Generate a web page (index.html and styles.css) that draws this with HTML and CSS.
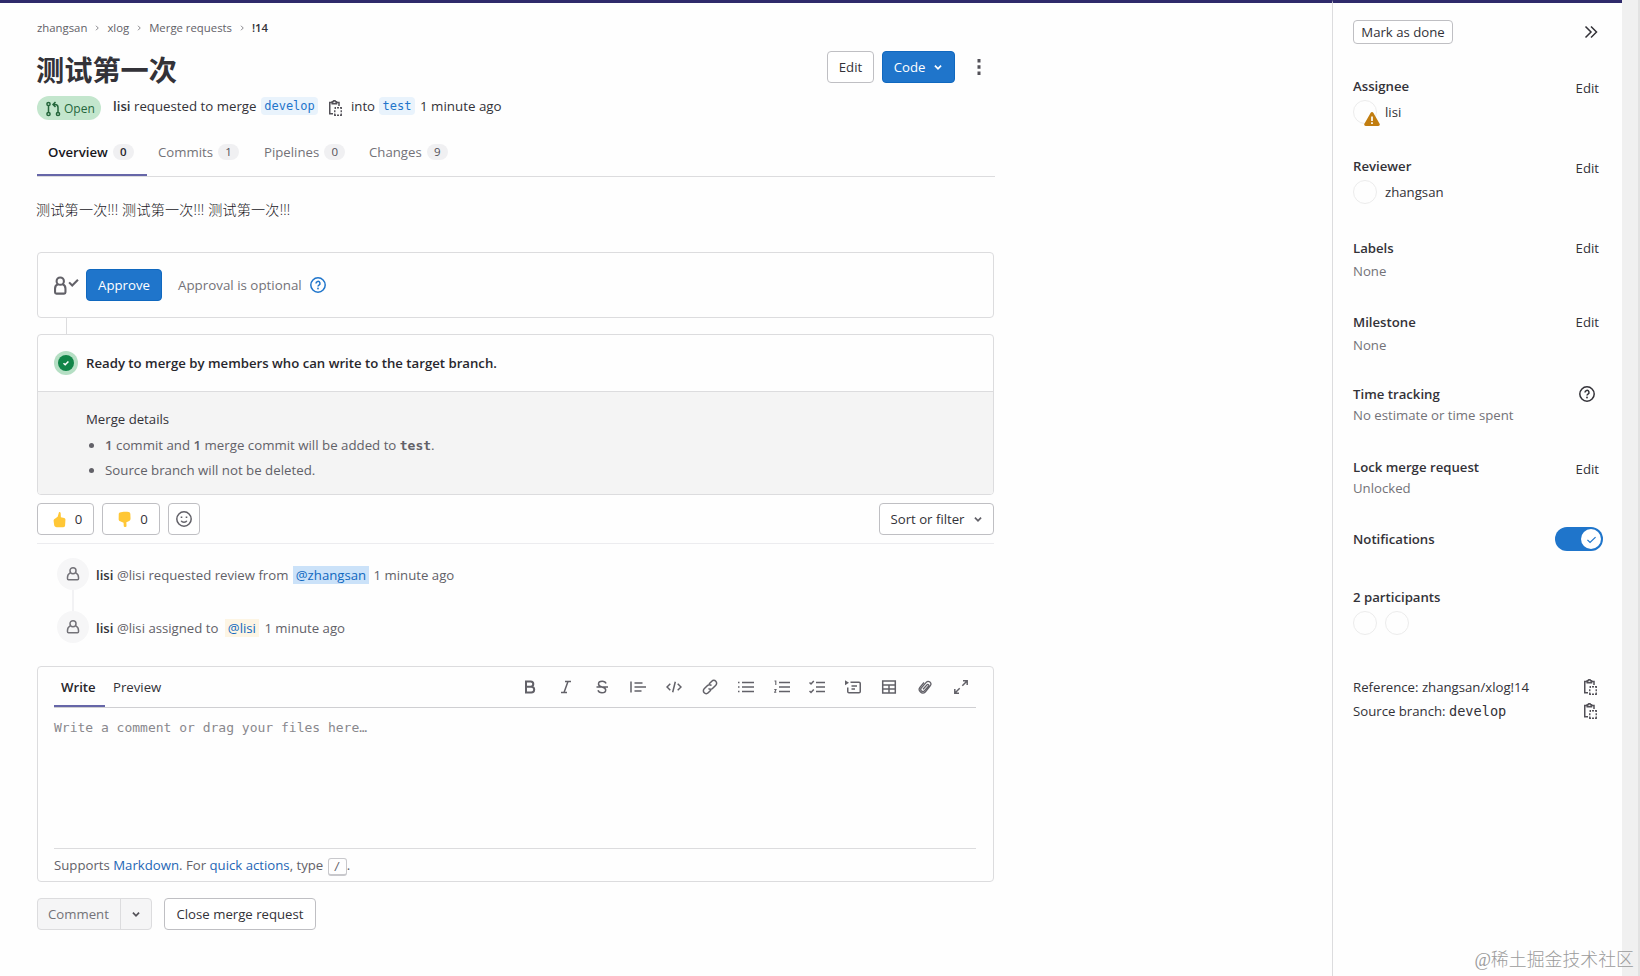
FILE: index.html
```html
<!DOCTYPE html>
<html lang="en">
<head>
  <meta charset="UTF-8">
  <meta name="viewport" content="width=device-width, initial-scale=1.0">
  <title>测试第一次 (!14) · Merge requests</title>
  <link rel="stylesheet" href="styles.css">
</head>
<body>
  <svg width="0" height="0" class="sprite">
    <symbol id="chevron-down" viewBox="0 0 16 16"><path d="M4.500 6.500 8 10l3.500-3.500" stroke-width="2"/></symbol>
    <symbol id="chevron-right" viewBox="0 0 16 16"><path d="M6 3.500 10.500 8 6 12.500" stroke-width="2"/></symbol>
    <symbol id="copy" viewBox="0 0 16 16"><path d="M4 2.500H1.750v11.250H5M8.800 2.500H11V6M4.200 3.800V1.800h1a1.100 1.100 0 0 1 2.300 0h1v2z"/><path d="M8 7.750h-.75V9M12 7.750h1.250V9M6.750 13.500v1.750H8M13.250 13.500v1.750H12M9 7.750h2M9 15.250h2M6.750 10.300v2M13.250 10.300v2" stroke-width="1.400"/></symbol>
    <symbol id="question" viewBox="0 0 16 16"><circle cx="8" cy="8" r="7.200"/><path d="M6 6.400a2 2 0 1 1 3 1.700c-.7.400-1 .700-1 1.300"/><circle cx="8" cy="11.500" r=".9" fill="currentColor" stroke="none"/></symbol>
    <symbol id="user" viewBox="0 0 16 16"><circle cx="8" cy="4.700" r="3"/><path d="M5.300 6.800C3.300 7.800 2.500 9.500 2.500 11.300v1.500c0 .600.400 1 1 1h9c.600 0 1-.400 1-1v-1.500c0-1.800-.800-3.500-2.800-4.500"/></symbol>
  </svg>

  <div class="page">
    <div class="main">
      <nav class="breadcrumbs">
        <span>zhangsan</span><svg class="sep"><use href="#chevron-right"/></svg>
        <span>xlog</span><svg class="sep"><use href="#chevron-right"/></svg>
        <span>Merge requests</span><svg class="sep"><use href="#chevron-right"/></svg>
        <b>!14</b>
      </nav>

      <header class="mr-header">
        <h1>测试第一次</h1>
        <div class="header-actions">
          <button class="btn btn-edit">Edit</button>
          <button class="btn btn-blue btn-code">Code <svg class="s12"><use href="#chevron-down"/></svg></button>
          <svg class="kebab" viewBox="0 0 16 16"><path d="M6.500 0h3v3.500h-3zM6.500 6.250h3v3.500h-3zM6.500 12.500h3V16h-3z" fill="currentColor" stroke="none"/></svg>
        </div>
      </header>

      <div class="mr-info">
        <span class="badge-open">
          <svg class="s16" viewBox="0 0 16 16"><circle cx="3.500" cy="3" r="1.600"/><circle cx="3.500" cy="13" r="1.600"/><circle cx="13" cy="13" r="1.600"/><path d="M3.500 4.700v6.600M13 11.300V6.500c0-2-1-3-3-3H8.500M10.500 1 8 3.500 10.500 6"/></svg>
          Open
        </span>
        <span class="mr-author"><b>lisi</b> requested to merge</span>
        <code class="branch branch-source">develop</code>
        <svg class="s16 copy-branch"><use href="#copy"/></svg>
        <span class="into">into</span>
        <code class="branch branch-target">test</code>
        <span class="ago">1 minute ago</span>
      </div>

      <div class="tabs">
        <a class="tab active">Overview <i>0</i></a>
        <a class="tab commits">Commits <i>1</i></a>
        <a class="tab pipelines">Pipelines <i>0</i></a>
        <a class="tab changes">Changes <i>9</i></a>
      </div>

      <p class="description">测试第一次!!! 测试第一次!!! 测试第一次!!!</p>

      <section class="card approval">
        <svg class="approval-icon" viewBox="0 0 24 18"><circle cx="6" cy="4.800" r="3.500"/><path d="M3.600 7.800C1.700 8.700 1 10 1 12v3.500c0 .800.500 1.300 1.300 1.300h7.400c.800 0 1.300-.500 1.300-1.300V12c0-2-.7-3.300-2.600-4.200M14.500 6l3 3L23 3.500"/></svg>
        <button class="btn btn-blue btn-approve">Approve</button>
        <span class="muted optional">Approval is optional</span>
        <svg class="s16 blue"><use href="#question"/></svg>
      </section>
      <div class="connector"></div>

      <section class="card merge-box">
        <div class="ready">
          <span class="status"><svg viewBox="0 0 16 16"><circle cx="8" cy="8" r="8" fill="#108548" stroke="none"/><path d="m5.500 8.200 1.700 1.600 3.200-3.300" stroke="#fff"/></svg></span>
          <b>Ready to merge by members who can write to the target branch.</b>
        </div>
        <div class="merge-details">
          <p>Merge details</p>
          <ul>
            <li><b>1</b> commit and <b>1</b> merge commit will be added to <code>test</code>.</li>
            <li>Source branch will not be deleted.</li>
          </ul>
        </div>
      </section>

      <div class="awards">
        <button class="btn award"><svg class="thumb" viewBox="0 0 14 18"><path d="M6.500 1c1-.500 2 .500 1.800 2.200L8.500 6.500l3.500.800c1 .200 1.500 1 1.400 2l-.4 6.200c-.1 1.200-.8 1.800-2 1.800H4c-1.500 0-2.500-.8-2.700-2L.7 11c-.2-1.500.5-2.300 1.700-3L5 6z"/></svg>0</button>
        <button class="btn award award-down"><svg class="thumb" viewBox="0 0 14 18"><path d="M2 1.500C4.500.5 9 .5 11.500 1c1.200.2 1.700 1 1.800 2l.2 5c0 1.500-.7 2.500-2 3L9 12l.2 4c0 1.500-3 1.500-3 0L6 12.500 2.300 11C1 10.500.7 9.500.7 8.500L.8 3c0-.8.4-1.300 1.200-1.500z"/></svg>0</button>
        <button class="btn award award-add"><svg class="s16" viewBox="0 0 16 16"><circle cx="8" cy="8" r="7.200"/><path d="M5.200 9.700c1 2.100 4.600 2.100 5.600 0"/><path d="M5.500 5.500v1.500M10.500 5.500v1.500" stroke-width="1.600"/></svg></button>
        <button class="btn btn-sort">Sort or filter <svg class="s12"><use href="#chevron-down"/></svg></button>
      </div>

      <ul class="notes">
        <li class="note">
          <span class="note-icon"><svg class="s16"><use href="#user"/></svg></span>
          <span class="note-text"><b>lisi</b> @lisi requested review from <a class="mention me">@zhangsan</a> 1 minute ago</span>
        </li>
        <li class="note">
          <span class="note-icon"><svg class="s16"><use href="#user"/></svg></span>
          <span class="note-text"><b>lisi</b> @lisi assigned to <a class="mention other">@lisi</a> 1 minute ago</span>
        </li>
      </ul>

      <section class="card editor">
        <div class="editor-head">
          <span class="editor-tab active">Write</span>
          <span class="editor-tab">Preview</span>
          <div class="toolbar">
            <svg viewBox="0 0 16 16"><path d="M4 2.500h4.700a2.600 2.600 0 0 1 0 5.200H4zM4 7.700h5.300a2.900 2.900 0 0 1 0 5.800H4z" stroke-width="2"/></svg>
            <svg viewBox="0 0 16 16"><path d="M7 2.500h6M3 13.500h6M10 2.500l-4 11"/></svg>
            <svg viewBox="0 0 16 16"><path d="M12 4.500C11.500 3 10 2.300 8.200 2.300 6 2.300 4.500 3.300 4.500 5S6 7.400 8 8s3.700 1.200 3.700 3-1.500 2.800-3.700 2.800c-2 0-3.500-.8-4-2.500M2.500 8h11.500"/></svg>
            <svg viewBox="0 0 16 16"><path d="M1 2.500v11M4.500 4h8M4.500 8H16M4.500 12h7"/></svg>
            <svg viewBox="0 0 16 16"><path d="M4.300 4.700 1 8l3.300 3.300M11.700 4.700 15 8l-3.300 3.300M9.300 2.700 6.700 13.300"/></svg>
            <svg viewBox="0 0 16 16"><path d="m7 5 2.800-2.800a2.800 2.800 0 0 1 4 4L10.500 9.500a2.800 2.800 0 0 1-4 0M9 11l-2.800 2.800a2.800 2.800 0 0 1-4-4L5.500 6.500a2.800 2.800 0 0 1 4 0"/></svg>
            <svg viewBox="0 0 16 16"><path d="M4 3.500h12M4 8h12M4 12.500h12"/><path d="M0 3.500h1.500M0 8h1.500M0 12.500h1.500"/></svg>
            <svg viewBox="0 0 16 16"><path d="M5 3.500h11M5 8h11M5 12.500h11"/><path d="M.5 2h1.300v4M.3 10.500H2L.7 13.300h1.600" stroke-width="1.100"/></svg>
            <svg viewBox="0 0 16 16"><path d="M7 3.500h9M7 8h9M7 12.500h9M.5 3.500 2 5l2.800-3M.5 12 2 13.500l2.800-3"/></svg>
            <svg viewBox="0 0 16 16"><path d="M5.500 3.250H14c.700 0 1.250.500 1.250 1.250v8c0 .700-.5 1.250-1.250 1.250H4c-.7 0-1.250-.5-1.250-1.250V8.500M6.500 7H12M6.500 10H10"/><path d="M0 1.300 4 3.800 0 6.300z" fill="currentColor" stroke="none"/></svg>
            <svg viewBox="0 0 16 16"><path d="M1.700 2h12.600v12H1.700zM1.700 6h12.600M1.700 10h12.600M8 6v8"/></svg>
            <svg viewBox="0 0 16 16"><path d="m6 10.300 4.300-4.700a1 1 0 0 1 1.400 1.300l-4.400 5a2.100 2.100 0 0 1-3.100-2.800l5-5.700a2.600 2.600 0 0 1 4 3.400L8.300 13a3.600 3.600 0 0 1-5.400-4.700L7 3.500" stroke-width="1.300"/></svg>
            <svg viewBox="0 0 16 16"><path d="M10 1.800h4.200V6M14 2 9.300 6.700M6 14.200H1.800V10M2 14l4.700-4.700"/></svg>
          </div>
        </div>
        <div class="editor-text">Write a comment or drag your files here…</div>
        <div class="editor-foot">Supports <a>Markdown</a>. For <a>quick actions</a>, type <kbd>/</kbd>.</div>
      </section>

      <div class="form-actions">
        <div class="split"><span>Comment</span><span class="split-toggle"><svg class="s12"><use href="#chevron-down"/></svg></span></div>
        <button class="btn btn-close">Close merge request</button>
      </div>
    </div>

    <aside class="sidebar">
      <div class="side-top">
        <button class="btn btn-done">Mark as done</button>
        <svg class="collapse" viewBox="0 0 16 16"><path d="M2.500 2.500 8 8l-5.500 5.500M8 2.500 13.500 8 8 13.500"/></svg>
      </div>
      <div class="block assignee">
        <div class="row"><b>Assignee</b><a>Edit</a></div>
        <div class="person">
          <span class="avatar"><svg class="warning" viewBox="0 0 16 14"><path d="M8 0c.6 0 1 .3 1.300.800l6.300 11c.6 1-.1 2.200-1.300 2.200H1.700C.5 14-.2 12.800.4 11.800l6.300-11C7 .3 7.400 0 8 0z" fill="#c17d10" stroke="none"/><path d="M8 4.500V9M8 10.300v1.800" stroke="#fff" stroke-width="1.700"/></svg></span>lisi
        </div>
      </div>
      <div class="block reviewer">
        <div class="row"><b>Reviewer</b><a>Edit</a></div>
        <div class="person"><span class="avatar"></span>zhangsan</div>
      </div>
      <div class="block labels">
        <div class="row"><b>Labels</b><a>Edit</a></div>
        <div class="value">None</div>
      </div>
      <div class="block milestone">
        <div class="row"><b>Milestone</b><a>Edit</a></div>
        <div class="value">None</div>
      </div>
      <div class="block time">
        <div class="row"><b>Time tracking</b><svg class="s16"><use href="#question"/></svg></div>
        <div class="value">No estimate or time spent</div>
      </div>
      <div class="block lock">
        <div class="row"><b>Lock merge request</b><a>Edit</a></div>
        <div class="value">Unlocked</div>
      </div>
      <div class="block notifications">
        <b>Notifications</b>
        <span class="toggle"><span class="knob"><svg viewBox="0 0 16 16"><path d="m3 8.500 3.200 3.200L13 5"/></svg></span></span>
      </div>
      <div class="block participants">
        <b>2 participants</b>
        <div class="avatars"><span class="avatar"></span><span class="avatar"></span></div>
      </div>
      <div class="block refs">
        <div class="ref"><span>Reference: zhangsan/xlog!14</span><svg class="s16"><use href="#copy"/></svg></div>
        <div class="ref"><span>Source branch: <code>develop</code></span><svg class="s16"><use href="#copy"/></svg></div>
      </div>
    </aside>
    <div class="scrollbar"></div>
  </div>
  <div class="watermark">@稀土掘金技术社区</div>
</body>
</html>
```
FILE: styles.css
```css
* {
  box-sizing: border-box;
}
body {
  margin: 0;
  height: 976px;
  overflow: hidden;
  background: #fefefe;
  color: #333238;
  font: 13.2px/20px "Open Sans", "Noto Sans CJK SC", sans-serif;
}
b {
  font-weight: 600;
}
svg {
  display: block;
  flex: none;
  fill: none;
  stroke: currentColor;
  stroke-width: 1.5;
}
.sprite {
  position: absolute;
}
.s16 {
  width: 16px;
  height: 16px;
}
.s12 {
  width: 14px;
  height: 14px;
}
code {
  font-family: "DejaVu Sans Mono", monospace;
  font-size: 12px;
}
.page {
  display: flex;
  height: 976px;
}
.main {
  width: 1332px;
  border-top: 3px solid #2f2a6b;
  padding: 15px 337px 0 37px;
}
.sidebar {
  width: 290px;
  border-top: 3px solid #2f2a6b;
  border-left: 1px solid #dcdcde;
  padding: 17px 19px 0 20px;
}
.scrollbar {
  width: 18px;
  background: #f0f0f0;
  border-right: 2px solid #e2e2e2;
}

/* header */
.breadcrumbs {
  display: flex;
  align-items: center;
  height: 20px;
  font-size: 11.35px;
  color: #626168;
}
.breadcrumbs b {
  color: #333238;
}
.sep {
  width: 8px;
  height: 8px;
  margin: 0 6px;
  color: #89888d;
}
.mr-header {
  display: flex;
  justify-content: space-between;
  height: 50px;
  margin-top: 8px;
}
h1 {
  margin: 4px 0 0 -1px;
  font-size: 28.2px;
  line-height: 40px;
  font-weight: 700;
}
.header-actions {
  display: flex;
  padding-top: 5px;
}
.btn {
  display: flex;
  align-items: center;
  justify-content: center;
  height: 32px;
  padding: 0;
  border: 1px solid #bfbfc3;
  border-radius: 4px;
  background: #fff;
  color: #333238;
  font: inherit;
}
.btn-blue {
  background: #1f75cb;
  border-color: #1068bf;
  color: #fff;
  font-weight: 500;
}
.btn-edit {
  width: 47px;
}
.btn-code {
  width: 73px;
  padding-left: 2px;
  margin-left: 8px;
  gap: 6px;
}
.kebab {
  width: 16px;
  height: 16px;
  margin: 8px 8px 0 16px;
  color: #535158;
}
.mr-info {
  display: flex;
  height: 24px;
  line-height: 20px;
}
.badge-open {
  display: flex;
  align-items: center;
  width: 64px;
  height: 24px;
  padding: 1px 0 0 8px;
  gap: 3px;
  border-radius: 12px;
  background: #c3e6cd;
  color: #24663b;
  font-size: 12px;
}
.mr-author {
  width: 148px;
  margin-left: 12px;
  white-space: nowrap;
  font-size: 13.25px;
}
.branch {
  height: 18px;
  margin-top: 1px;
  line-height: 19px;
  border-radius: 4px;
  background: #e9f3fc;
  color: #1f75cb;
  text-align: center;
}
.branch-source {
  width: 57px;
}
.copy-branch {
  margin: 4px 6px 0 10px;
}
.into {
  width: 25px;
  padding-left: 1px;
}
.branch-target {
  width: 36px;
  margin-left: 4px;
}
.ago {
  margin-left: 5px;
  font-size: 13.35px;
}
.copy-branch, .ref svg {
  color: #535158;
}
.tabs {
  display: flex;
  height: 57px;
  width: 958px;
  border-bottom: 1px solid #dcdcde;
}
.tab {
  display: flex;
  align-items: center;
  gap: 5px;
  height: 57px;
  padding: 6px 0 0 11px;
  color: #737278;
}
.tab.active {
  width: 110px;
  height: 56px;
  color: #18171d;
  font-weight: 600;
  border-bottom: 2px solid #6666a8;
  padding-top: 9px;
}
.commits {
  width: 106px;
}
.pipelines {
  width: 105px;
}
.tab i {
  width: 21px;
  height: 16px;
  border-radius: 8px;
  background: #f0f0f2;
  color: #535158;
  font-size: 11.5px;
  line-height: 16px;
  font-style: normal;
  text-align: center;
}
.tab.active i {
  color: #28272d;
}
.description {
  margin: 23px 0 32px -1px;
  font-size: 14.1px;
  font-weight: 300;
  letter-spacing: 0.2px;
  color: #18171d;
}

/* widgets */
.card {
  width: 957px;
  border: 1px solid #dcdcde;
  border-radius: 4px;
}
.approval {
  display: flex;
  align-items: center;
  height: 66px;
  padding-left: 16px;
}
.approval-icon {
  width: 25px;
  height: 19px;
  color: #626168;
  stroke-width: 2;
}
.btn-approve {
  width: 76px;
  margin-left: 7px;
}
.muted {
  color: #737278;
}
.optional {
  width: 124px;
  margin: 0 8px 0 16px;
  white-space: nowrap;
  font-size: 13.35px;
}
.blue {
  color: #1f75cb;
}
.connector {
  width: 1px;
  height: 16px;
  margin-left: 29px;
  background: #dcdcde;
}
.merge-box {
  height: 161px;
  overflow: hidden;
}
.ready {
  display: flex;
  align-items: center;
  height: 56px;
  padding-left: 16px;
  gap: 8px;
}
.ready b {
  color: #28272d;
}
.status {
  padding: 4px;
  border-radius: 50%;
  background: #b5dfc4;
}
.status svg {
  width: 16px;
  height: 16px;
}
.merge-details {
  height: 103px;
  padding: 17px 0 0 48px;
  border-top: 1px solid #dcdcde;
  background: #f4f4f4;
}
.merge-details p {
  margin: 0;
}
.merge-details ul {
  margin: 4px 0 0;
  padding-left: 19px;
  line-height: 25px;
  color: #626168;
}
.merge-details li {
  font-size: 13.28px;
}
.merge-details code {
  font-size: 13px;
  font-weight: 700;
}
.awards {
  display: flex;
  gap: 8px;
  height: 49px;
  width: 957px;
  padding-top: 8px;
  border-bottom: 1px solid #ececef;
}
.award {
  width: 57px;
  gap: 9px;
  padding-left: 4px;
}
.award-down {
  width: 58px;
}
.award-add {
  width: 32px;
  padding: 0;
  color: #626168;
}
.thumb {
  width: 13px;
  height: 17px;
  fill: #ffc736;
  stroke: none;
}
.btn-sort {
  width: 115px;
  margin-left: auto;
  padding-left: 2px;
  gap: 6px;
}
.btn-sort svg {
  color: #626168;
}
.notes {
  margin: 0;
  padding: 14px 0 1px 20px;
  list-style: none;
}
.note {
  position: relative;
  display: flex;
  align-items: center;
  gap: 7px;
  height: 32px;
  margin-bottom: 21px;
  color: #626168;
}
.note b {
  color: #333238;
}
.note-text {
  padding-top: 2px;
}
.note:first-child::after {
  content: "";
  position: absolute;
  left: 15px;
  top: 32px;
  width: 2px;
  height: 21px;
  background: #f2f2f4;
}
.note-icon {
  display: flex;
  align-items: center;
  justify-content: center;
  width: 32px;
  height: 32px;
  border-radius: 50%;
  background: #f6f6f7;
  color: #737278;
}
.mention {
  padding: 0 3px;
  background: #fdf5e4;
  color: #1068bf;
}
.mention.me {
  margin: 0 1px;
  background: #cbe2f9;
}
.mention.other {
  margin: 0 2px 0 3px;
}

/* comment form */
.editor {
  height: 216px;
  margin-top: 1px;
  padding: 0 17px 0 16px;
}
.editor-head {
  display: flex;
  height: 41px;
  border-bottom: 1px solid #cfcfd2;
}
.editor-tab {
  height: 41px;
  padding: 0 8px;
  line-height: 40px;
}
.editor-tab.active {
  width: 51px;
  height: 40px;
  padding-left: 7px;
  color: #28272d;
  font-weight: 600;
  border-bottom: 2px solid #6666a8;
}
.toolbar {
  display: flex;
  align-items: center;
  gap: 19.9px;
  margin: 0 7px 0 auto;
  color: #626168;
}
.toolbar svg {
  width: 16px;
  height: 16px;
}
.editor-text {
  height: 141px;
  padding-top: 10px;
  border-bottom: 1px solid #dcdcde;
  color: #89888d;
  font: 13px/20px "DejaVu Sans Mono", monospace;
}
.editor-foot {
  padding-top: 6px;
  color: #626168;
}
.editor-foot a {
  color: #1f66b5;
}
kbd {
  display: inline-block;
  width: 19px;
  height: 18px;
  margin-left: 1px;
  border: 1px solid #c8c8cc;
  border-bottom-width: 2px;
  border-radius: 3px;
  font: 11px/15px "DejaVu Sans Mono", monospace;
  text-align: center;
}
.form-actions {
  display: flex;
  gap: 12px;
  margin-top: 16px;
}
.split {
  display: flex;
  width: 115px;
  height: 32px;
  border: 1px solid #dcdcde;
  border-radius: 4px;
  background: #f5f5f6;
  color: #737278;
  line-height: 30px;
  padding-left: 10px;
}
.split-toggle {
  display: flex;
  align-items: center;
  justify-content: center;
  width: 31px;
  margin-left: auto;
  border-left: 1px solid #dcdcde;
  color: #535158;
}
.btn-close {
  width: 152px;
}

/* sidebar */
.side-top {
  display: flex;
  justify-content: space-between;
  align-items: center;
  height: 24px;
}
.btn-done {
  width: 100px;
  height: 24px;
}
.collapse {
  width: 16px;
  height: 16px;
  margin: 0 4px 0 0;
}
.block {
  height: 80px;
}
.row {
  display: flex;
  justify-content: space-between;
  padding-right: 4px;
}
.row svg {
  margin: 2px 4px 0 0;
}
.assignee {
  margin-top: 32px;
}
.assignee a, .reviewer a, .lock a {
  padding-top: 2px;
}
.person {
  display: flex;
  align-items: center;
  gap: 8px;
  margin-top: 2px;
}
.avatar {
  position: relative;
  width: 24px;
  height: 24px;
  border: 1px solid #ececec;
  border-radius: 50%;
}
.warning {
  position: absolute;
  left: 10px;
  top: 11px;
  width: 16px;
  height: 14px;
}
.labels {
  height: 74px;
  margin-top: 2px;
}
.value {
  margin-top: 3px;
  color: #737278;
}
.milestone {
  height: 72px;
}
.time {
  height: 73px;
}
.time .value {
  margin-top: 1px;
}
.lock {
  height: 70px;
}
.lock .value {
  margin-top: -1px;
}
.notifications {
  display: flex;
  justify-content: space-between;
  height: 60px;
  padding-top: 2px;
}
.toggle {
  display: flex;
  justify-content: flex-end;
  width: 48px;
  height: 24px;
  margin-top: -2px;
  padding: 2px;
  border-radius: 12px;
  background: #1f75cb;
}
.knob {
  display: flex;
  align-items: center;
  justify-content: center;
  width: 20px;
  height: 20px;
  border-radius: 50%;
  background: #fff;
  color: #1f75cb;
}
.knob svg {
  width: 13px;
  height: 13px;
}
.participants {
  height: 90px;
}
.avatars {
  display: flex;
  gap: 8px;
  margin-top: 4px;
}
.ref {
  display: flex;
  justify-content: space-between;
  height: 24px;
  padding-right: 4px;
}
.ref svg {
  margin-top: 2px;
}
.refs code {
  font-size: 13.6px;
}
.watermark {
  position: absolute;
  right: 6px;
  bottom: 3px;
  color: #9b9b9b;
  font: 300 17.9px/26px "Liberation Serif", "Noto Sans CJK SC", serif;
}
```
